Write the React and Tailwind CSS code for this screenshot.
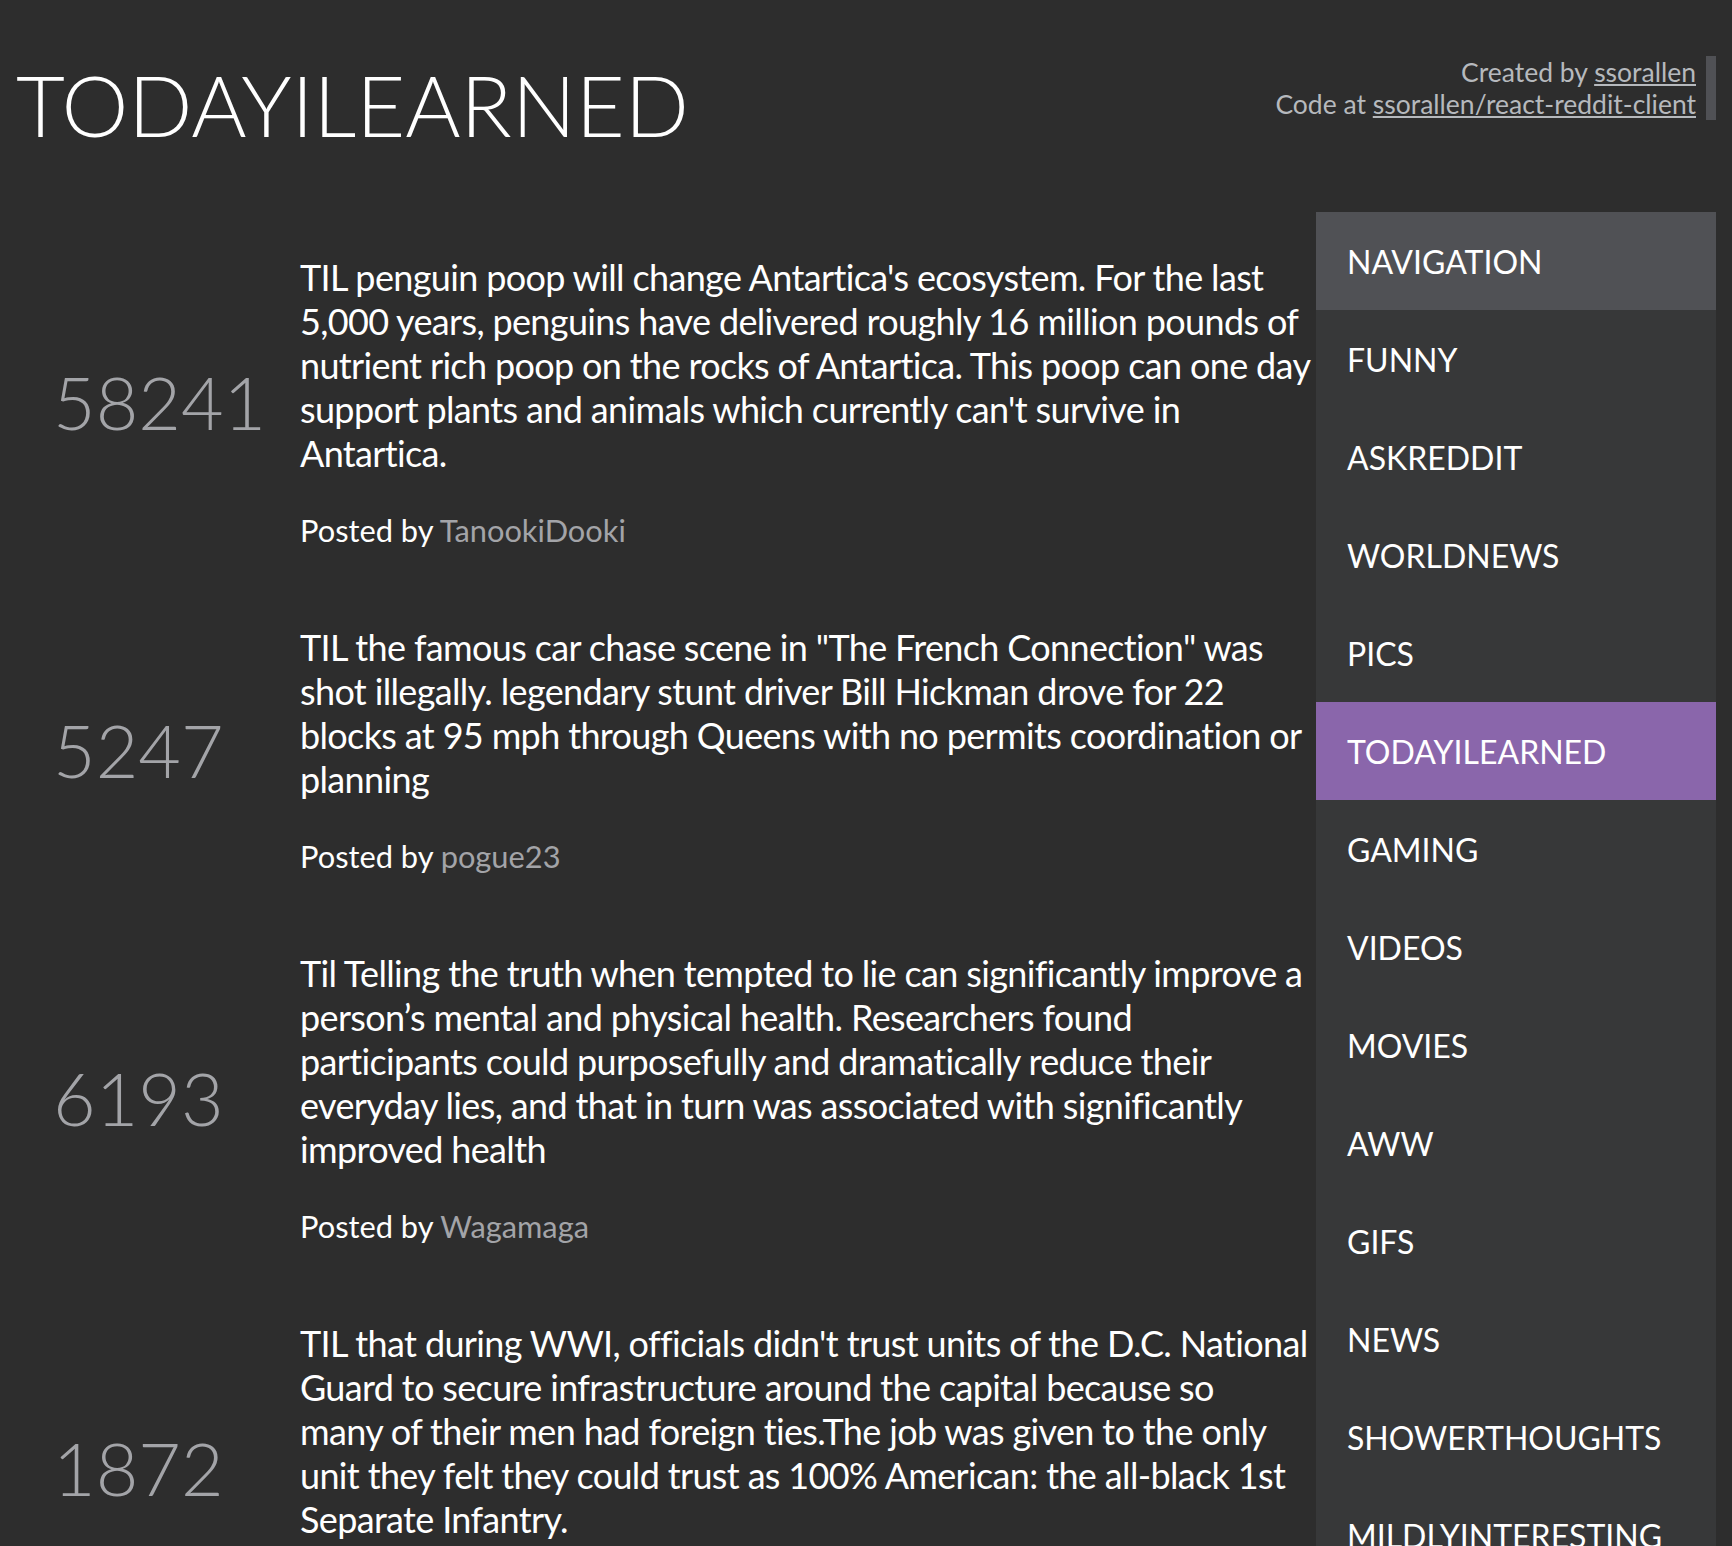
import React from 'react';

const posts = [
    {
        score: 58241,
        title: "TIL penguin poop will change Antartica's ecosystem. For the last 5,000 years, penguins have delivered roughly 16 million pounds of nutrient rich poop on the rocks of Antartica. This poop can one day support plants and animals which currently can't survive in Antartica.",
        author: 'TanookiDooki',
    },
    {
        score: 5247,
        title: 'TIL the famous car chase scene in "The French Connection" was shot illegally. legendary stunt driver Bill Hickman drove for 22 blocks at 95 mph through Queens with no permits coordination or planning',
        author: 'pogue23',
    },
    {
        score: 6193,
        title: 'Til Telling the truth when tempted to lie can significantly improve a person\u2019s mental and physical health. Researchers found participants could purposefully and dramatically reduce their everyday lies, and that in turn was associated with significantly improved health',
        author: 'Wagamaga',
    },
    {
        score: 1872,
        title: "TIL that during WWI, officials didn't trust units of the D.C. National Guard to secure infrastructure around the capital because so\nmany of their men had foreign ties.The job was given to the only unit they felt they could trust as 100% American: the all-black 1st Separate Infantry.",
        author: 'mvea',
    },
];

const subreddits = [
    'FUNNY', 'ASKREDDIT', 'WORLDNEWS', 'PICS', 'TODAYILEARNED', 'GAMING', 'VIDEOS',
    'MOVIES', 'AWW', 'GIFS', 'NEWS', 'SHOWERTHOUGHTS', 'MILDLYINTERESTING',
];

const Post = ({ post }) => (
    <div className="flex items-center pt-[38px] pb-[38px]">
        {/* Score */}
        <div className="w-[300px] shrink-0 pl-[53px] text-[73.5px] leading-[1.2] font-light text-[#a3a4a8]">
            {post.score}
        </div>
        <div className="flex-1 min-w-0">
            <p className="whitespace-pre-line text-[36px] leading-[44px] tracking-[-0.65px] text-white">{post.title}</p>
            <p className="mt-[38px] text-[30.8px] leading-[36px] text-white">
                Posted by <span className="text-[#a3a4a8]">{post.author}</span>
            </p>
        </div>
    </div>
);

export default function App() {
    return (
        <div className="min-h-screen bg-[#2d2d2d] font-['Lato','Liberation_Sans',sans-serif]">
            {/* Header */}
            <header className="flex items-start justify-between pt-[54px] pl-4 pr-4">
                <h1 className="text-[84.5px] leading-[1.2] font-light text-white">TODAYILEARNED</h1>
                <div className="mt-[2px] border-r-[10px] border-[#505155] pr-[10px] text-right text-[26.5px] leading-[32px] text-[#b6b9bd]">
                    <div>Created by <a className="underline">ssorallen</a></div>
                    <div>Code at <a className="underline">ssorallen/react-reddit-client</a></div>
                </div>
            </header>

            <div className="mt-[57px] flex items-start pr-4">
                <main className="flex-1 min-w-0 pt-[5px] pr-[4px]">
                    {posts.map((p) => <Post key={p.score} post={p} />)}
                </main>

                {/* Sidebar */}
                <nav className="w-[400px] shrink-0 bg-[#373839] text-white text-[32px] leading-[1.2]">
                    <div className="h-[98px] flex items-center pl-[31px] pt-[2px] bg-[#505155]">NAVIGATION</div>
                    {subreddits.map((s) => (
                        <div
                            key={s}
                            className={`h-[98px] flex items-center pl-[31px] pt-[2px] ${s === 'TODAYILEARNED' ? 'bg-[#8a66ab]' : ''}`}
                        >
                            {s}
                        </div>
                    ))}
                </nav>
            </div>
        </div>
    );
}
